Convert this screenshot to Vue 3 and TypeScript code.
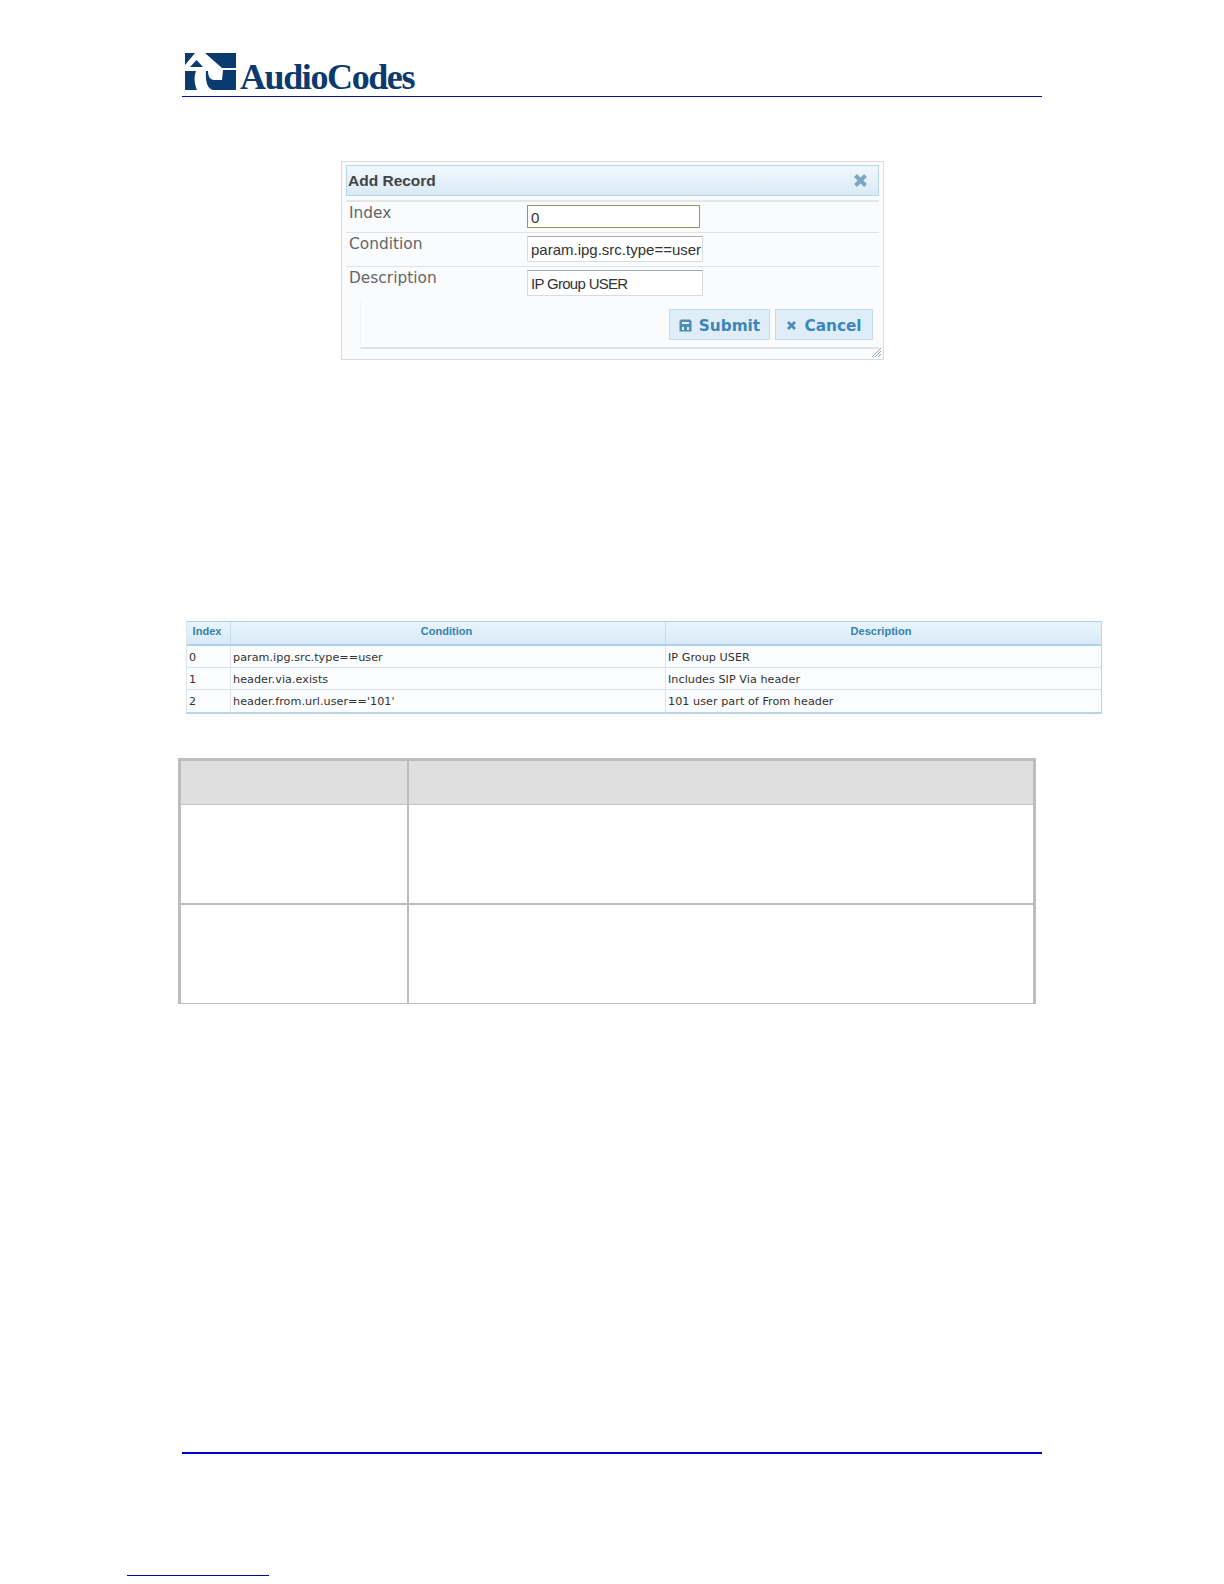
<script setup lang="ts">
interface Row { index: string; condition: string; description: string }
const rows: Row[] = [
  { index: '0', condition: 'param.ipg.src.type==user', description: 'IP Group USER' },
  { index: '1', condition: 'header.via.exists', description: 'Includes SIP Via header' },
  { index: '2', condition: "header.from.url.user=='101'", description: '101 user part of From header' },
]
</script>

<template>
  <div class="page">
    <header class="head">
      <div class="logo">
        <svg class="mark" width="51" height="37" viewBox="0 0 51 37">
          <g fill="#0a3a6e">
            <path d="M0 0H10L0 12Z" />
            <path d="M20 0H51V15H37Z" />
            <path d="M11.5 7L18 14H5Z" />
            <path d="M0 18H11C9 23 9 30 12 37H0Z" />
            <path d="M21 18H23C23 23 25 27 29 27H37L38 17H51V37H29C23 37 20 29 21 18Z" />
          </g>
        </svg>
        <span class="word">AudioCodes</span>
      </div>
    </header>

    <section class="dialog">
      <div class="title">
        <span>Add Record</span>
        <svg class="close" width="15" height="15" viewBox="0 0 15 15">
          <path d="M2.5 2.5L12.5 12.5M12.5 2.5L2.5 12.5" stroke="#7ba6c4" stroke-width="4" />
        </svg>
      </div>
      <div class="field first">
        <label>Index</label>
        <div class="input active">0</div>
      </div>
      <div class="field">
        <label>Condition</label>
        <div class="input wide">param.ipg.src.type==user</div>
      </div>
      <div class="field last">
        <label>Description</label>
        <div class="input wide tight">IP Group USER</div>
      </div>
      <div class="actions">
        <button class="btn submit" type="button">
          <svg width="13" height="13" viewBox="0 0 13 13">
            <path fill="#4f8db5" d="M2 0.5H11L12.5 2V12.5H0.5V2Z" />
            <path fill="#e3f0f9" d="M3 3H10V5H3ZM3 8H5V11H3ZM8 8H10V11H8Z" />
          </svg>
          Submit
        </button>
        <button class="btn cancel" type="button">
          <svg width="11" height="11" viewBox="0 0 11 11">
            <path d="M2 2L9 9M9 2L2 9" stroke="#4f8db5" stroke-width="2.8" />
          </svg>
          Cancel
        </button>
      </div>
      <svg class="grip" width="11" height="11" viewBox="0 0 11 11">
        <path d="M1 10L10 1M4 10L10 4M7 10L10 7" stroke="#8fa9ba" stroke-width="1" />
      </svg>
    </section>

    <section class="records">
      <div class="rec-row rec-head">
        <div>Index</div>
        <div>Condition</div>
        <div>Description</div>
      </div>
      <div v-for="r in rows" :key="r.index" class="rec-row rec-body">
        <div>{{ r.index }}</div>
        <div>{{ r.condition }}</div>
        <div>{{ r.description }}</div>
      </div>
    </section>

    <section class="spec">
      <div class="spec-row spec-head"><div></div><div></div></div>
      <div class="spec-row spec-a"><div></div><div></div></div>
      <div class="spec-row spec-b"><div></div><div></div></div>
    </section>

    <div class="foot-rule"></div>
    <div class="link-rule"></div>
  </div>
</template>

<style>
html, body { background: #fff; }
</style>

<style scoped>
.page {
  width: 1224px;
  height: 1584px;
  box-sizing: border-box;
  overflow: hidden;
  padding-top: 53px;
  background: #fff;
  font-family: "DejaVu Sans", sans-serif;
}
.head {
  width: 860px;
  height: 43px;
  margin-left: 182px;
  border-bottom: 1px solid #0a0a9c;
}
.logo { display: flex; align-items: flex-end; padding-left: 3px; height: 37px; }
.mark { flex: none; }
.word {
  margin: 0 0 -5px 4px;
  font-family: "Liberation Serif", serif;
  font-weight: 700;
  font-size: 36px;
  line-height: 36px;
  letter-spacing: -1.4px;
  color: #0a3a6e;
}
.dialog {
  position: relative;
  width: 543px;
  height: 199px;
  box-sizing: border-box;
  margin: 64px 0 0 341px;
  padding: 3px 4px;
  background: #f9fbfc;
  border: 1px solid #dcdcdc;
}
.title {
  display: flex;
  justify-content: space-between;
  align-items: center;
  height: 31px;
  box-sizing: border-box;
  padding: 0 10px 0 1px;
  border: 1px solid #b8d6ea;
  background: linear-gradient(#f2f8fc, #d9eaf6);
  font-family: "Liberation Sans", sans-serif;
  font-weight: 700;
  font-size: 15.5px;
  color: #444;
}
.field {
  display: flex;
  height: 34px;
  box-sizing: border-box;
  border-bottom: 1px solid #dfe3e5;
  padding-top: 3px;
}
.field.first {
  margin-top: 4px;
  height: 33px;
  border-top: 2px solid #e4e7e9;
}
.field.last { border-bottom: 0; }
.field label {
  width: 181px;
  height: 18px;
  margin-top: -1px;
  padding-left: 3px;
  box-sizing: border-box;
  font-size: 15.4px;
  line-height: 18px;
  color: #666;
}
.input {
  width: 176px;
  height: 26px;
  box-sizing: border-box;
  padding-left: 3px;
  border: 1px solid #d8dcde;
  border-top-color: #aaa;
  background: #fff;
  font-family: "Liberation Sans", sans-serif;
  font-size: 15px;
  line-height: 26px;
  color: #333;
  white-space: nowrap;
}
.input.tight { letter-spacing: -0.7px; }
.input.active {
  width: 173px;
  height: 23px;
  border: 1px solid #8f9a62;
  line-height: 23px;
}
.actions {
  display: flex;
  justify-content: flex-end;
  gap: 5px;
  height: 50px;
  box-sizing: border-box;
  margin: -2px 0 0 14px;
  padding: 10px 6px 0 0;
  border-left: 1px solid #f1f3f4;
  border-bottom: 2px solid #dfe3e5;
}
.btn {
  display: flex;
  align-items: center;
  justify-content: center;
  gap: 7px;
  height: 31px;
  padding: 2px 0 0;
  border: 1px solid #c3dcec;
  background: #deedf7;
  font-family: "DejaVu Sans", sans-serif;
  font-weight: 700;
  font-size: 15.3px;
  color: #3b87b8;
}
.submit { width: 101px; }
.cancel { width: 98px; }
.grip { position: absolute; right: 1px; bottom: 1px; }
.records {
  width: 916px;
  margin: 261px 0 0 186px;
  border-left: 1px solid #dbe6ee;
  border-right: 1px solid #b8d6ea;
  border-bottom: 2px solid #b8d4e8;
  box-sizing: border-box;
  font-size: 11.2px;
  letter-spacing: 0.04px;
}
.rec-row {
  display: grid;
  grid-template-columns: 43px 435px 1fr;
}
.rec-row > div { padding-left: 2px; border-left: 1px solid #dfe6eb; }
.rec-row > div:first-child { border-left: 0; }
.rec-head {
  height: 25px;
  border-top: 1px solid #aed1e8;
  border-bottom: 2px solid #aed1e8;
  box-sizing: border-box;
  background: linear-gradient(#e9f4fb, #d8eaf7);
  color: #3580ad;
  font-family: "Liberation Sans", sans-serif;
  font-size: 11px;
  font-weight: 700;
  line-height: 19px;
  text-align: center;
}
.rec-head > div { padding: 0 3px 0 0; border-left-color: #c5dcec; }
.rec-head > div:last-child { padding-right: 5px; }
.rec-body {
  height: 22px;
  box-sizing: border-box;
  border-bottom: 1px solid #dcdfe1;
  background: #fbfcfd;
  color: #333;
  line-height: 23px;
}
.rec-body:last-child { border-bottom: 0; }
.spec {
  width: 858px;
  margin: 44px 0 0 178px;
  box-sizing: border-box;
  border-style: solid;
  border-color: #bdbdbd;
  border-width: 3px 3px 1px;
}
.spec-row {
  display: grid;
  grid-template-columns: 226px 1fr;
  box-sizing: border-box;
}
.spec-row > div + div { border-left: 2px solid #bdbdbd; }
.spec-head { height: 44px; background: #dfdfdf; border-bottom: 1px solid #c4c4c4; }
.spec-a { height: 100px; border-bottom: 2px solid #bdbdbd; }
.spec-b { height: 98px; }
.foot-rule {
  width: 860px;
  height: 2px;
  margin: 448px 0 0 182px;
  background: #0000cc;
}
.link-rule {
  width: 142px;
  height: 1px;
  margin: 121px 0 0 127px;
  background: #0000a0;
}
</style>
